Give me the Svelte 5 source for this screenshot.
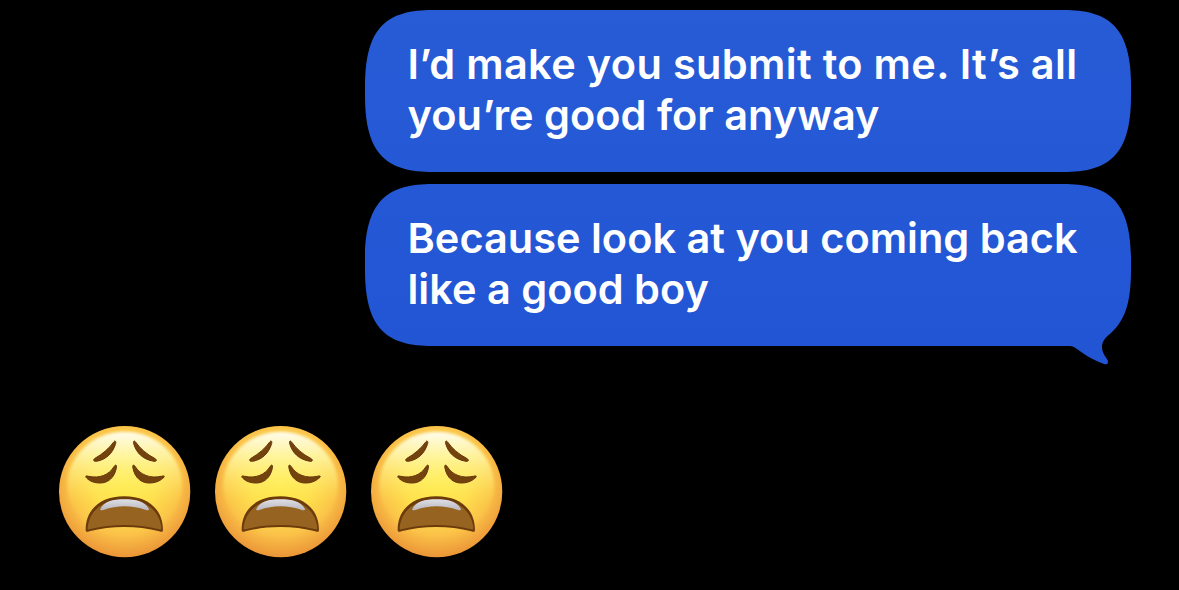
<script lang="ts">
	const messages = [
		{ lines: ['I’d make you submit to me. It’s all', 'you’re good for anyway'], from: '#285cd6', to: '#2458d5', tail: false },
		{ lines: ['Because look at you coming back', 'like a good boy'], from: '#2558d5', to: '#2255d4', tail: true },
	]

	const faces = [0, 1, 2]

	const bubble = 'M68 0H698C743 0 766 16 766 76V86C766 146 743 162 698 162H68C23 162 0 146 0 86V76C0 16 23 0 68 0Z'
	const tailed = 'M68 0H698C743 0 766 16 766 76V86C766 119 760 136 746 149C741 153 737 157 737 163C737 169 741 173 742.5 176C744 179 742 181 739 180C725 175 718 169 709 163Q707 162 704 162H68C23 162 0 146 0 86V76C0 16 23 0 68 0Z'
</script>

<main>
	{#each messages as message, i}
		<div class="bubble">
			<svg class="shape" viewBox="0 0 766 182" aria-hidden="true">
				<defs>
					<linearGradient id="blue{i}" x1="0" y1="0" x2="0" y2="1">
						<stop offset="0" stop-color={message.from} />
						<stop offset="1" stop-color={message.to} />
					</linearGradient>
				</defs>
				<path d={message.tail ? tailed : bubble} fill="url(#blue{i})" />
			</svg>
			<p>
				{#each message.lines as line}
					<span class:wide={line.length > 32}>{line}</span>
				{/each}
			</p>
		</div>
	{/each}

	<div class="faces">
		{#each faces as n}
			<svg class="face" viewBox="28 28 394 394" role="img" aria-label="weary face">
				<defs>
					<radialGradient id="skin{n}" cx="225" cy="190" r="235" gradientUnits="userSpaceOnUse">
						<stop offset="0" stop-color="#ffea48" />
						<stop offset=".4" stop-color="#fedf4c" />
						<stop offset=".7" stop-color="#fbc248" />
						<stop offset="1" stop-color="#ea9336" />
					</radialGradient>
					<linearGradient id="shine{n}" x1="0" y1="0" x2="0" y2="1">
						<stop offset="0" stop-color="#fffdee" />
						<stop offset=".25" stop-color="#fff8a8" stop-opacity=".8" />
						<stop offset=".65" stop-color="#ffee55" stop-opacity=".12" />
						<stop offset="1" stop-color="#ffec4c" stop-opacity="0" />
					</linearGradient>
					<linearGradient id="teeth{n}" x1="0" y1="0" x2="0" y2="1">
						<stop offset="0" stop-color="#dedfe7" />
						<stop offset="1" stop-color="#b9b7bd" />
					</linearGradient>
					<filter id="soft{n}" x="-10%" y="-10%" width="120%" height="120%">
						<feGaussianBlur stdDeviation="5" />
					</filter>
				</defs>
				<circle cx="225" cy="225" r="197" fill="url(#skin{n})" />
				<ellipse cx="225" cy="207" rx="172" ry="162" fill="url(#shine{n})" filter="url(#soft{n})" />
				<g fill="#73420d" stroke="#65370a" stroke-width="3" stroke-linejoin="round">
					<path d="M193 75C198 69 200 77 197 84C189 108 172 128 141 134C133 135 128 131 136 125C158 112 178 96 193 75Z" />
					<path d="M257 75C252 69 250 77 253 84C261 108 278 128 313 134C321 135 323 130 315 125C291 113 272 96 257 75Z" />
					<path d="M193 150C199 141 202 146 200 155C194 184 174 201 147 199C127 198 116 190 109 182C107 177 111 177 117 179C149 186 178 175 193 150Z" />
					<path d="M257 150C251 141 248 146 250 155C256 184 276 201 303 199C323 198 334 190 343 182C346 177 341 177 335 179C302 186 272 175 257 150Z" />
				</g>
				<path d="M108 339C108 279 152 239 224 239C296 239 340 279 340 339C340 346 336 347 329 344C263 327 185 327 119 344C112 347 108 346 108 339Z" fill="#6b3b0c" />
				<path d="M114 334C118 283 160 248 224 248C288 248 331 283 335 334C335 340 331 339 325 337C262 321 186 321 123 337C117 339 114 340 114 334Z" fill="#966420" />
				<path d="M152 277C164 254 188 248 224 248C260 248 285 254 298 277C299 281 295 281 289 280C245 265 204 265 161 280C155 281 150 281 152 277Z" fill="url(#teeth{n})" />
			</svg>
		{/each}
	</div>
</main>

<style>
	:global(body) {
		background: #000;
	}

	main {
		box-sizing: border-box;
		width: 1179px;
		height: 590px;
		padding: 10px 48px 0 59.4px;
		display: flex;
		flex-direction: column;
		align-items: flex-end;
		gap: 12px;
		overflow: hidden;
		background: #000;
	}

	.bubble {
		position: relative;
		box-sizing: border-box;
		width: 766px;
		height: 162px;
		padding: 29px 42.5px;
	}

	.shape {
		position: absolute;
		top: 0;
		left: 0;
		width: 766px;
		height: 182px;
	}

	p {
		position: relative;
		margin: 0;
		font-family: Inter, 'Liberation Sans', sans-serif;
		font-size: 41.5px;
		font-weight: 600;
		line-height: 51px;
		color: #fff;
	}

	span {
		display: block;
		white-space: nowrap;
	}

	.wide {
		letter-spacing: 0.33px;
	}

	.faces {
		align-self: flex-start;
		display: flex;
		gap: 24.7px;
		margin-top: 68.4px;
	}

	.face {
		display: block;
		width: 131.3px;
		height: 131.3px;
	}
</style>
